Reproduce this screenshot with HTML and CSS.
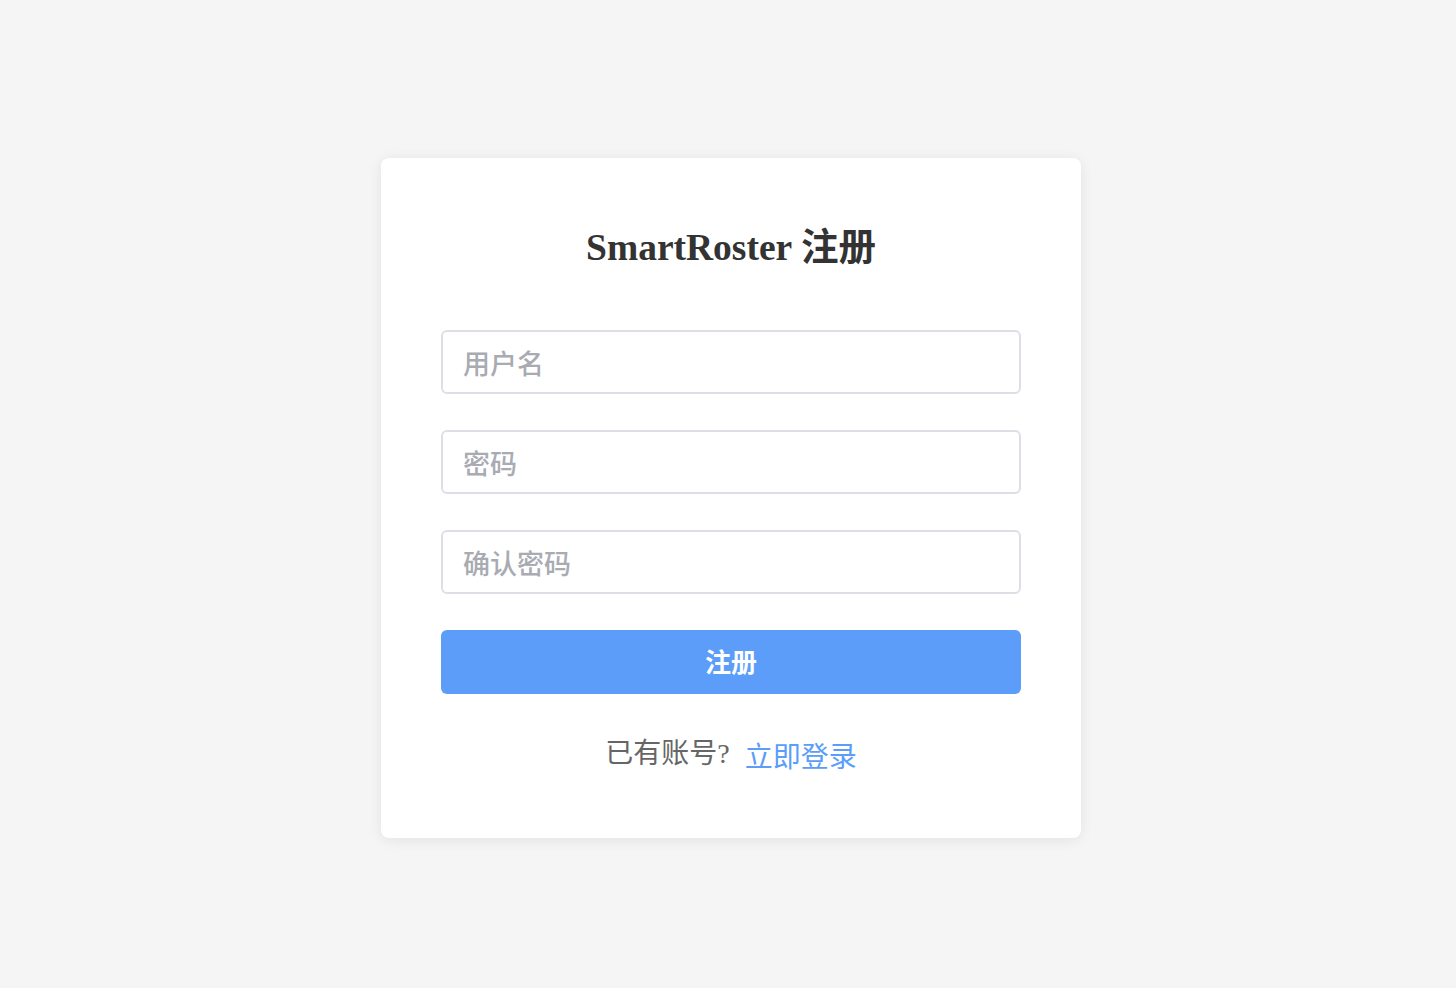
FILE: index.html
```html
<!DOCTYPE html>
<html lang="zh-CN">
<head>
<meta charset="utf-8">
<title>SmartRoster 注册</title>
<link rel="stylesheet" href="styles.css">
</head>
<body>
<div class="page">
  <div class="card">
    <h1 class="title">SmartRoster 注册</h1>
    <form class="form">
      <input class="field" type="text" placeholder="用户名">
      <input class="field" type="password" placeholder="密码">
      <input class="field" type="password" placeholder="确认密码">
      <button class="submit" type="button">注册</button>
    </form>
    <p class="footer">已有账号?<a class="link" href="#">立即登录</a></p>
  </div>
</div>
</body>
</html>
```
FILE: styles.css
```css
html, body {
  margin: 0;
  padding: 0;
  background: #f5f5f5;
}
.page {
  display: flex;
  justify-content: center;
  padding: 158px 0 0 6px;
  min-height: 100vh;
  box-sizing: border-box;
}
.card {
  width: 700px;
  box-sizing: border-box;
  padding: 60px 60px 60px;
  background: #fff;
  border-radius: 8px;
  box-shadow: 0 2px 14px rgba(0, 0, 0, 0.08);
  height: 680px;
}
.title {
  margin: 3px 0 55px;
  font-family: "Liberation Serif", "Noto Sans CJK SC", serif;
  font-weight: bold;
  font-size: 37.5px;
  line-height: 54px;
  color: #333;
  text-align: center;
}
.form {
  display: flex;
  flex-direction: column;
  gap: 36px;
  margin: 0;
}
.field {
  display: block;
  width: 100%;
  height: 64px;
  box-sizing: border-box;
  border: 2px solid #dcdfe6;
  border-radius: 6px;
  padding: 0 20px;
  font-family: "Noto Sans CJK SC", sans-serif;
  font-size: 27px;
  font-weight: 500;
  color: #333;
  background: #fff;
  outline: none;
}
.field::placeholder {
  color: #a8abb2;
}
.submit {
  display: block;
  width: 100%;
  height: 64px;
  border: none;
  border-radius: 6px;
  background: #5b9df9;
  color: #fff;
  font-family: "Noto Sans CJK SC", sans-serif;
  font-size: 26px;
  font-weight: bold;
  padding: 0 0 4px;
  cursor: pointer;
}
.footer {
  margin: 36px 0 0;
  text-align: center;
  font-family: "Liberation Serif", "Noto Sans CJK SC", serif;
  font-size: 28px;
  line-height: 48px;
  color: #666;
}
.link {
  margin-left: 15px;
  color: #5b9df9;
  text-decoration: none;
  position: relative;
  top: 4px;
}
```
